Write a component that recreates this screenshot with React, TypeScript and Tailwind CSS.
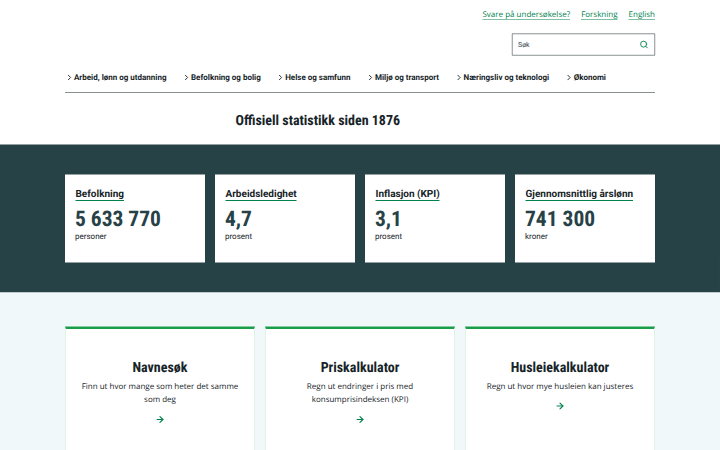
import React from 'react';
import { ArrowRight, ChevronRight, Search } from 'lucide-react';

const topLinks = ['Svare på undersøkelse?', 'Forskning', 'English'];

const navItems = [
  'Arbeid, lønn og utdanning',
  'Befolkning og bolig',
  'Helse og samfunn',
  'Miljø og transport',
  'Næringsliv og teknologi',
  'Økonomi',
];

const keyFigures = [
  { title: 'Befolkning', value: '5 633 770', unit: 'personer' },
  { title: 'Arbeidsledighet', value: '4,7', unit: 'prosent' },
  { title: 'Inflasjon (KPI)', value: '3,1', unit: 'prosent' },
  { title: 'Gjennomsnittlig årslønn', value: '741 300', unit: 'kroner' },
];

const tools = [
  { title: 'Navnesøk', text: 'Finn ut hvor mange som heter det samme som deg' },
  { title: 'Priskalkulator', text: 'Regn ut endringer i pris med konsumprisindeksen (KPI)' },
  { title: 'Husleiekalkulator', text: 'Regn ut hvor mye husleien kan justeres' },
];

export default function App() {
  return (
    <div className="h-[450px] w-[720px] overflow-hidden">
      {/* Desktop layout at half size. The tiny rotation turns off font hinting so small text keeps its shape */}
      <div className="h-[900px] w-[1440px] origin-top-left scale-50 rotate-[0.002deg] overflow-hidden bg-white font-['Open_Sans',sans-serif] text-[#162327] [text-rendering:geometricPrecision]">
        <header className="mx-auto flex h-[289px] w-[1180px] flex-col">
          {/* Top links */}
          <div className="flex justify-end gap-[22px] pt-4 text-base leading-[22px] text-[#00824d]">
            {topLinks.map((link) => (
              <a key={link} href="#" className="border-b border-[#00824d]">
                {link}
              </a>
            ))}
          </div>

          {/* Search */}
          <div className="mt-7 ml-auto flex h-11 w-[286px] items-center justify-between border border-[#162327] pr-3 pl-[11px]">
            <span className="pt-px font-['Roboto',sans-serif] text-sm text-[#274247]">Søk</span>
            <Search className="h-[18px] w-[18px] text-[#00824d]" strokeWidth={2.4} />
          </div>

          {/* Main menu */}
          <nav className="mt-7 flex h-[47px] gap-[31px] border-b border-[#162327] pt-1 font-['Roboto',sans-serif] text-base leading-6 font-bold">
            {navItems.map((item) => (
              <a key={item} href="#" className="flex h-6 items-center whitespace-nowrap">
                <ChevronRight className="h-[18px] w-[18px]" strokeWidth={2.4} />
                {item}
              </a>
            ))}
          </nav>

          <h1 className="mt-[34px] pl-[341px] font-['Roboto_Condensed','Roboto',sans-serif] text-[28px] leading-10 font-bold [font-stretch:75%]">
            Offisiell statistikk siden 1876
          </h1>
        </header>

        {/* Key figures */}
        <section className="h-[296px] bg-[#274247] pt-[60px]">
          <div className="mx-auto grid w-[1180px] grid-cols-4 gap-5">
            {keyFigures.map((figure) => (
              <div
                key={figure.title}
                className="flex h-[176px] flex-col items-start bg-white px-5 pt-6 font-['Roboto',sans-serif]"
              >
                <a
                  href="#"
                  className="ml-px border-b-2 border-[#00824d] text-xl leading-[27px] font-bold whitespace-nowrap"
                >
                  {figure.title}
                </a>
                <div className="mt-2 font-['Roboto_Condensed','Roboto',sans-serif] text-[43px] leading-[54px] font-bold text-[#274247] [font-stretch:75%]">
                  {figure.value}
                </div>
                <div className="-mt-px text-base leading-5">{figure.unit}</div>
              </div>
            ))}
          </div>
        </section>

        {/* Tools */}
        <section className="h-[315px] bg-[#f0f8f9] pt-[68px]">
          <div className="mx-auto grid w-[1180px] grid-cols-3 gap-5">
            {tools.map((tool) => (
              <a
                key={tool.title}
                href="#"
                className="flex h-[300px] flex-col items-center border-x-2 border-t-[5px] border-x-[#e3f1e6] border-t-[#1a9d49] bg-white px-7 pt-[56px] text-center"
              >
                <h2 className="font-['Roboto_Condensed','Roboto',sans-serif] text-[28px] leading-10 font-bold [font-stretch:75%]">
                  {tool.title}
                </h2>
                <p className="mt-1 text-base leading-[27px]">{tool.text}</p>
                <ArrowRight className="mt-[17px] h-5 w-5 text-[#00824d]" strokeWidth={2.7} />
              </a>
            ))}
          </div>
        </section>
      </div>
    </div>
  );
}
